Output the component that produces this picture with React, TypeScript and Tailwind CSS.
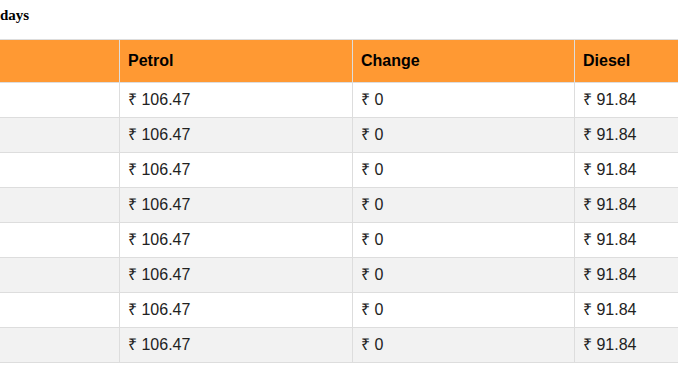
const rows = Array.from({ length: 8 }, () => ({ petrol: '106.47', change: '0', diesel: '91.84' }));

export default function App() {
  return (
    <div className="w-[678px] h-[370px] overflow-hidden bg-white">
      <h3 className="mt-[6px] mb-[15px] text-[15px] leading-[18px] font-bold text-black font-['Liberation_Serif',serif]">
        days
      </h3>
      <div className="-ml-[200px] w-[1000px]">
        <table className="w-full table-fixed border-collapse font-['Liberation_Sans',Arial,sans-serif] text-[16px] leading-[18px]">
          <colgroup>
            <col className="w-[319px]" />
            <col className="w-[233px]" />
            <col className="w-[222px]" />
            <col className="w-[226px]" />
          </colgroup>
          <thead>
            <tr className="bg-[#ff9933] text-black">
              <th className="border border-[#dddddd] px-2 py-3 text-left font-bold"></th>
              <th className="border border-[#dddddd] px-2 py-3 text-left font-bold">Petrol</th>
              <th className="border border-[#dddddd] px-2 py-3 text-left font-bold">Change</th>
              <th className="border border-[#dddddd] px-2 py-3 text-left font-bold">Diesel</th>
            </tr>
          </thead>
          <tbody className="text-[#222]">
            {rows.map((r, i) => (
              <tr key={i} className={i % 2 === 1 ? 'bg-[#f2f2f2]' : 'bg-white'}>
                <td className="border border-[#dddddd] px-2 py-2"></td>
                <td className="border border-[#dddddd] px-2 py-2">₹ {r.petrol}</td>
                <td className="border border-[#dddddd] px-2 py-2">₹ {r.change}</td>
                <td className="border border-[#dddddd] px-2 py-2">₹ {r.diesel}</td>
              </tr>
            ))}
          </tbody>
        </table>
      </div>
    </div>
  );
}
